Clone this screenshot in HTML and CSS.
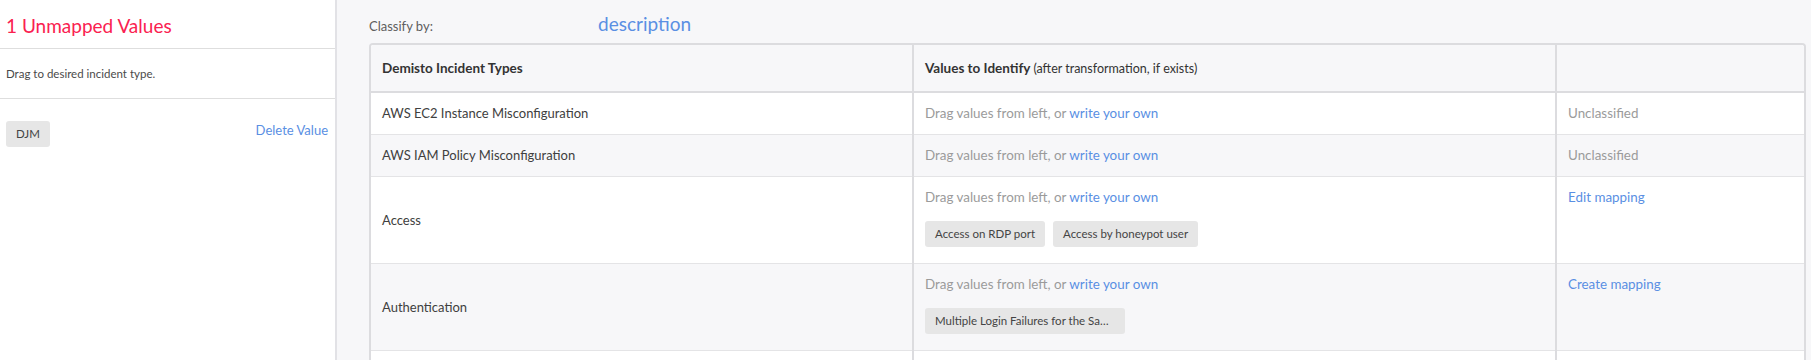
FILE: index.html
```html
<!DOCTYPE html>
<html>
<head>
<link rel="stylesheet" href="styles.css">
</head>
<body>
  <div class="page">
    <aside class="unmapped">
      <h2 class="unmapped-title">1 Unmapped Values</h2>
      <p class="unmapped-hint">Drag to desired incident type.</p>
      <div class="unmapped-list">
        <div class="value-row">
          <span class="chip">DJM</span>
          <a class="link" href="#">Delete Value</a>
        </div>
      </div>
    </aside>

    <main class="mapper">
      <div class="classify-by">
        <span class="classify-label">Classify by:</span>
        <span class="classify-field">description</span>
      </div>

      <div class="table-wrap">
        <table class="types-table">
          <colgroup>
            <col class="col-type">
            <col class="col-values">
            <col>
          </colgroup>
          <thead>
            <tr>
              <th>Demisto Incident Types</th>
              <th>Values to Identify <small>(after transformation, if exists)</small></th>
              <th></th>
            </tr>
          </thead>
          <tbody>
            <tr>
              <td class="type-name">AWS EC2 Instance Misconfiguration</td>
              <td><span class="muted">Drag values from left, or</span> <a class="link" href="#">write your own</a></td>
              <td><span class="muted">Unclassified</span></td>
            </tr>
            <tr>
              <td class="type-name">AWS IAM Policy Misconfiguration</td>
              <td><span class="muted">Drag values from left, or</span> <a class="link" href="#">write your own</a></td>
              <td><span class="muted">Unclassified</span></td>
            </tr>
            <tr>
              <td class="type-name">Access</td>
              <td>
                <span class="muted">Drag values from left, or</span> <a class="link" href="#">write your own</a>
                <div class="chips">
                  <span class="chip">Access on RDP port</span>
                  <span class="chip">Access by honeypot user</span>
                </div>
              </td>
              <td><a class="link" href="#">Edit mapping</a></td>
            </tr>
            <tr>
              <td class="type-name">Authentication</td>
              <td>
                <span class="muted">Drag values from left, or</span> <a class="link" href="#">write your own</a>
                <div class="chips">
                  <span class="chip chip-long">Multiple Login Failures for the Same User</span>
                </div>
              </td>
              <td><a class="link" href="#">Create mapping</a></td>
            </tr>
            <!-- next row only starts inside the frame -->
            <tr class="row-empty">
              <td></td>
              <td></td>
              <td></td>
            </tr>
          </tbody>
        </table>
      </div>
    </main>
  </div>
</body>
</html>
```

FILE: styles.css
```css
* {
  box-sizing: border-box;
  margin: 0;
  padding: 0;
}

body {
  font-family: Lato, "Noto Sans", sans-serif;
  color: #404040;
  background-color: #f7f7f9;
  height: 360px;
  overflow: hidden;
}

.page {
  display: flex;
  height: 100%;
}

/* left column: values not mapped yet */
.unmapped {
  width: 337px;
  flex-shrink: 0;
  background-color: #fff;
  border-right: 2px solid #e2e2e6;
}

.unmapped-title {
  height: 49px;
  padding: 14px 6px 0;
  font-size: 19px;
  font-weight: normal;
  line-height: 24px;
  color: #fa2150;
  border-bottom: 1px solid #dedede;
}

.unmapped-hint {
  display: flex;
  align-items: center;
  height: 50px;
  padding: 0 6px;
  font-size: 11.5px;
  color: #4a4a4a;
  border-bottom: 1px solid #dedede;
}

.unmapped-list {
  padding: 22px 7px 0 6px;
}

.value-row {
  display: flex;
  justify-content: space-between;
  align-items: flex-start;
}

.value-row .link {
  font-size: 13px;
  line-height: 18px;
}

.chip {
  display: inline-block;
  height: 26px;
  padding: 0 10px;
  font-size: 11.5px;
  line-height: 26px;
  color: #444;
  background-color: #e6e6e6;
  border-radius: 3px;
  white-space: nowrap;
}

.chip-long {
  max-width: 200px;
  overflow: hidden;
  text-overflow: ellipsis;
  vertical-align: top;
}

.link {
  color: #5a8fe3;
  text-decoration: none;
}

.muted {
  color: #9b9b9b;
}

/* right column: mapping table */
.mapper {
  flex: 1;
  padding: 8px 5px 0 32px;
}

.classify-by {
  display: flex;
  align-items: baseline;
  height: 35px;
  line-height: 32px;
}

.classify-label {
  width: 229px;
  font-size: 13px;
  color: #5e5e5e;
}

.classify-field {
  font-size: 19px;
  color: #5a8fe3;
}

.table-wrap {
  border: 2px solid #dcdcdf;
  border-bottom: none;
  border-radius: 4px 4px 0 0;
  overflow: hidden;
  background-color: #fff;
}

.types-table {
  width: 100%;
  table-layout: fixed;
  border-collapse: collapse;
  font-size: 13.4px;
}

.col-type {
  width: 542px;
}

.col-values {
  width: 643px;
}

.types-table th,
.types-table td {
  padding: 12px 11px;
  line-height: 17px;
  text-align: left;
  vertical-align: top;
  border-left: 2px solid #dcdcdf;
}

.types-table th:first-child,
.types-table td:first-child {
  border-left: none;
}

.types-table th {
  height: 47px;
  vertical-align: middle;
  font-size: 13.5px;
  font-weight: bold;
  color: #333;
  background-color: #f7f7f9;
  border-bottom: 2px solid #dcdcdf;
}

.types-table th small {
  font-size: 12.5px;
  font-weight: normal;
  color: #333;
}

.types-table td {
  border-bottom: 1px solid #e4e4e6;
}

.types-table tbody tr:nth-child(even) {
  background-color: #f7f7f9;
}

.types-table td.type-name {
  vertical-align: middle;
  font-size: 13px;
}

.row-empty td {
  height: 41px;
}

.chips {
  display: flex;
  gap: 8px;
  margin: 15px 0 4px;
}
```
